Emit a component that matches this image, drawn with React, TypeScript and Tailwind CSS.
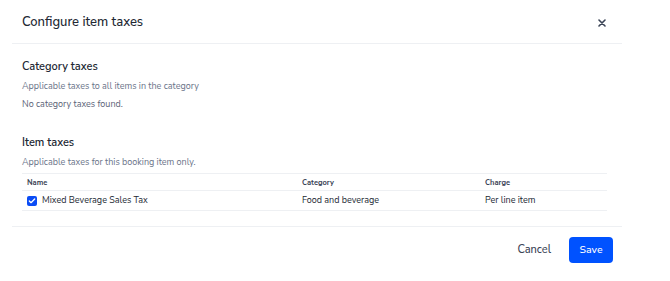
import { Check } from 'lucide-react';

const font = { fontFamily: '"Nunito Sans", Lato, "Noto Sans", sans-serif' };

export default function App() {
  return (
    <div className="h-[281px] w-[670px] bg-white text-[#1f2533]" style={font}>
      <div className="w-[622px] pl-3">
        {/* Header */}
        <div className="flex h-[44px] items-center justify-between border-b border-[#eef0f3] pt-[2px] pl-[10px] pr-[16px]">
          <h2 className="text-[13px] font-medium text-[#222833]">Configure item taxes</h2>
          <button type="button" aria-label="Close" className="text-[#3b4456]">
            <svg width="8" height="8" viewBox="0 0 8 8">
              <path d="M1 1L7 7M7 1L1 7" stroke="currentColor" strokeWidth="1.6" strokeLinecap="round" />
            </svg>
          </button>
        </div>

        {/* Body */}
        <div className="border-b border-[#eef0f3] pb-[15px] pl-[10px]">
          <div className="pt-[16px]">
            <h3 className="text-[11px] font-semibold leading-[14px] text-[#222833]">Category taxes</h3>
            <p className="mt-[5px] text-[9px] leading-[14px] text-[#6b7489]">
              Applicable taxes to all items in the category
            </p>
            <p className="mt-[4px] text-[9px] leading-[14px] text-[#5c6478]">No category taxes found.</p>
          </div>

          <div className="pt-[25px]">
            <h3 className="text-[11px] font-semibold leading-[14px] text-[#222833]">Item taxes</h3>
            <p className="mt-[5px] text-[9px] leading-[14px] text-[#6b7489]">
              Applicable taxes for this booking item only.
            </p>
            <table className="mt-[4px] w-[585px] border-collapse text-left">
              <thead>
                <tr className="h-[17px] border-y border-[#eef0f3] text-[7.5px] font-bold text-[#3b4456]">
                  <th className="pl-[5px] pt-px font-bold">Name</th>
                  <th className="w-[183px] pt-px font-bold">Category</th>
                  <th className="w-[122px] pt-px font-bold">Charge</th>
                </tr>
              </thead>
              <tbody>
                <tr className="h-[20px] border-b border-[#eef0f3] text-[9px] text-[#222833]">
                  <td className="pl-[5px]">
                    <div className="flex items-center gap-[5px]">
                      <span className="flex h-[10px] w-[10px] items-center justify-center rounded-[2px] bg-[#0a4cf5]">
                        <Check className="h-[8px] w-[8px] text-white" strokeWidth={4} />
                      </span>
                      <span>Mixed Beverage Sales Tax</span>
                    </div>
                  </td>
                  <td>Food and beverage</td>
                  <td>Per line item</td>
                </tr>
              </tbody>
            </table>
          </div>
        </div>

        {/* Footer */}
        <div className="flex items-center justify-end gap-[18px] pt-[10px] pr-[9px]">
          <button type="button" className="text-[11px] font-medium text-[#3b4456]">
            Cancel
          </button>
          <button
            type="button"
            className="h-[26px] w-[44px] rounded-[4px] bg-[#0052ff] text-[10.5px] font-medium text-white"
          >
            Save
          </button>
        </div>
      </div>
    </div>
  );
}
